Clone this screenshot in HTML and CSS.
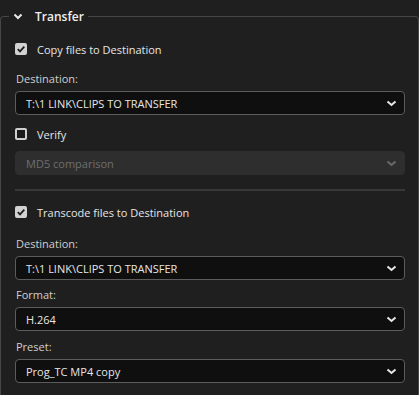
FILE: index.html
```html
<!DOCTYPE html>
<html lang="en">

<head>
  <meta charset="UTF-8">
  <title>Transfer</title>
  <link rel="stylesheet" href="styles.css">
</head>

<body>
  <fieldset class="panel">
    <legend class="panel-title">
      <svg class="chevron" width="10" height="7" viewBox="0 0 10 7">
        <path d="M1.5 1.5 L5 5 L8.5 1.5" />
      </svg>
      <span>Transfer</span>
    </legend>

    <label class="check-row first">
      <span class="box checked"><svg viewBox="0 0 12 12"><path d="M2.8 6.2 L5 8.4 L9.3 3.6" /></svg></span>
      Copy files to Destination
    </label>

    <div class="field">
      <div class="field-label">Destination:</div>
      <div class="select">
        <span>T:\1 LINK\CLIPS TO TRANSFER</span>
        <svg class="arrow" width="11" height="7" viewBox="0 0 11 7"><path d="M1.5 1.5 L5.5 5 L9.5 1.5" /></svg>
      </div>
    </div>

    <label class="check-row verify">
      <span class="box"></span>
      Verify
    </label>

    <div class="select disabled">
      <span>MD5 comparison</span>
      <svg class="arrow" width="11" height="7" viewBox="0 0 11 7"><path d="M1.5 1.5 L5.5 5 L9.5 1.5" /></svg>
    </div>

    <hr class="divider">

    <label class="check-row">
      <span class="box checked"><svg viewBox="0 0 12 12"><path d="M2.8 6.2 L5 8.4 L9.3 3.6" /></svg></span>
      Transcode files to Destination
    </label>

    <div class="field spaced">
      <div class="field-label">Destination:</div>
      <div class="select">
        <span>T:\1 LINK\CLIPS TO TRANSFER</span>
        <svg class="arrow" width="11" height="7" viewBox="0 0 11 7"><path d="M1.5 1.5 L5.5 5 L9.5 1.5" /></svg>
      </div>
    </div>

    <div class="field">
      <div class="field-label">Format:</div>
      <div class="select">
        <span>H.264</span>
        <svg class="arrow" width="11" height="7" viewBox="0 0 11 7"><path d="M1.5 1.5 L5.5 5 L9.5 1.5" /></svg>
      </div>
    </div>

    <div class="field last">
      <div class="field-label">Preset:</div>
      <div class="select">
        <span>Prog_TC MP4 copy</span>
        <svg class="arrow" width="11" height="7" viewBox="0 0 11 7"><path d="M1.5 1.5 L5.5 5 L9.5 1.5" /></svg>
      </div>
    </div>
  </fieldset>
</body>

</html>
```

FILE: styles.css
```css
body {
  margin: 0;
  padding: 0;
  height: 100vh;
  background: #1f1f1f;
  overflow: hidden;
  font-family: "Open Sans", "Noto Sans", sans-serif;
  font-size: 11px;
  color: #e6e6e6;
}

.panel {
  margin: 6px 0 0 0;
  padding: 0 13px 0 14px;
  border: 1px solid #464646;
  border-bottom: none;
  border-radius: 4px 4px 0 0;
  min-width: 0;
  height: 400px;
}

.panel-title {
  display: flex;
  align-items: center;
  margin-left: -6px;
  padding: 0 4px 0 4px;
  height: 20px;
  font-weight: 600;
  color: #f0f0f0;
  font-size: 12px;
}

.chevron {
  margin-right: 12px;
}

.chevron path,
.arrow path {
  fill: none;
  stroke: #e8e8e8;
  stroke-width: 2;
}

.check-row {
  display: flex;
  align-items: center;
  height: 20px;
  color: #e6e6e6;
}

.check-row.first {
  margin-top: 13px;
}

.check-row.verify {
  margin-top: 9px;
}

.box {
  width: 12px;
  height: 12px;
  box-sizing: border-box;
  border: 2px solid #cfcfcf;
  border-radius: 2px;
  margin-right: 10px;
  background: #1a1a1a;
}

.box.checked {
  border: none;
  background: #d2d2d2;
}

.box svg {
  display: block;
  width: 12px;
  height: 12px;
}

.box path {
  fill: none;
  stroke: #1e1e1e;
  stroke-width: 1.8;
}

.field {
  margin-top: 12px;
}

.field + .field {
  margin-top: 7px;
}

.field.last {
  margin-top: 8px;
}

.field.spaced {
  margin-top: 14px;
}

.field-label {
  height: 16px;
  line-height: 16px;
  margin: 0 0 4px 1px;
  color: #cfcfcf;
}

.select {
  display: flex;
  align-items: center;
  justify-content: space-between;
  height: 24px;
  box-sizing: border-box;
  padding: 0 7px 0 10px;
  border: 1px solid #5c5c5c;
  border-radius: 4px;
  background: #0f0f0f;
  color: #e6e6e6;
}

.select.disabled {
  margin-top: 7px;
  border-color: #2e2e2e;
  background: #2e2e2e;
  color: #6e6e6e;
}

.select.disabled .arrow path {
  stroke: #6a6a6a;
}

.divider {
  margin: 14px 0 0 0;
  border: none;
  height: 2px;
  background: #383838;
}

.divider + .check-row {
  margin-top: 11px;
}
```
